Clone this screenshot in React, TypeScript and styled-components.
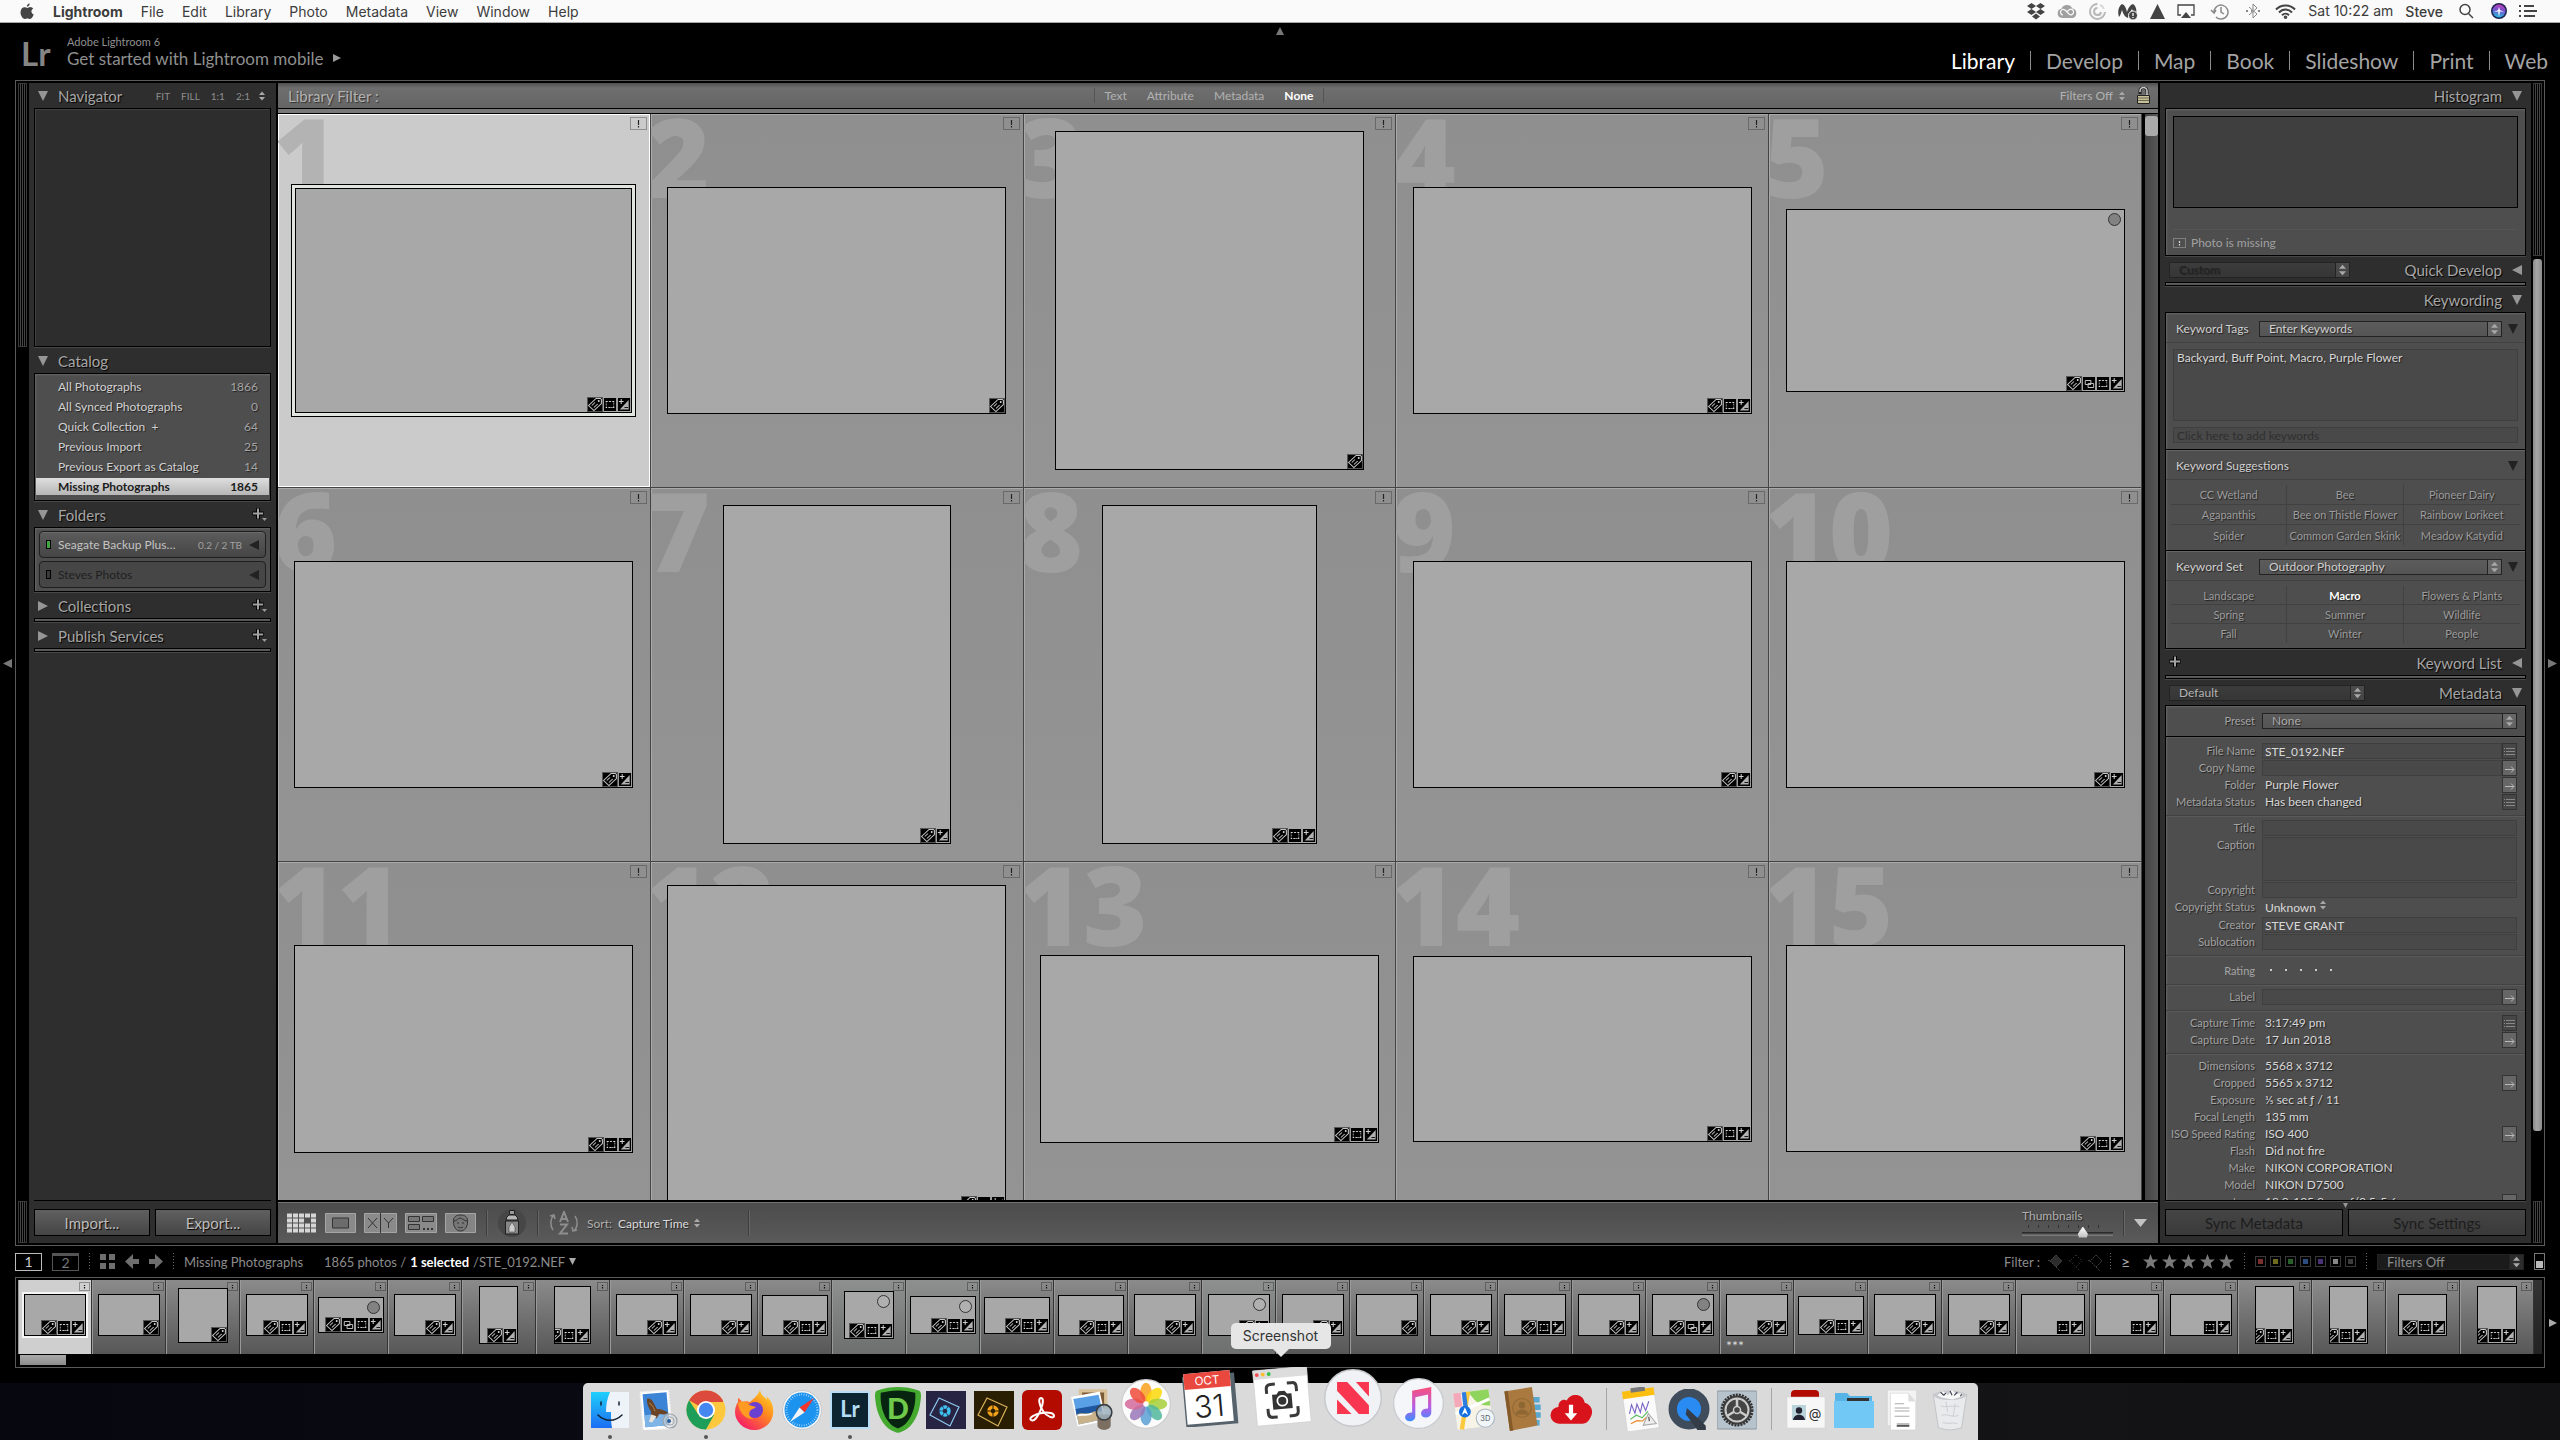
import React from "react";
import styled, { createGlobalStyle, css } from "styled-components";

const uiFont = `Lato, "Open Sans", "Noto Sans", sans-serif`;
const macFont = `Inter, Roboto, sans-serif`;

const Global = createGlobalStyle`
  * { box-sizing: border-box; }
  html, body, #root { height: 100%; }
  body { margin: 0; overflow: hidden; background: #000; font-family: ${uiFont}; font-size: 12px; color: #b4b4b4; }
  button, input, select, textarea { font-family: inherit; font-size: inherit; color: inherit; margin: 0; padding: 0; border: 0; background: none; border-radius: 0; }
  button { display: flex; align-items: center; text-align: left; cursor: pointer; }
  select { appearance: none; }
  svg { display: block; flex: none; }
  h1, h2, p, ul { margin: 0; padding: 0; font: inherit; }
`;

/* ---------- page ---------- */

const Page = styled.div`
  height: 100%;
  display: flex;
  flex-direction: column;
  background: linear-gradient(90deg, #07080f 0%, #0a0b12 30%, #141315 80%, #121113 100%);
`;

const MenuBar = styled.header`
  flex: none;
  height: 23px;
  display: flex;
  justify-content: space-between;
  align-items: center;
  background: #fafafa;
  border-bottom: 1px solid #a8a8a8;
  color: #3c3c3c;
  font: 14px/22px ${macFont};
`;

const MenuList = styled.nav`
  display: flex;
  align-items: center;
  gap: 18px;
  padding-left: 19px;
`;

const MenuItem = styled.button<{ $weight?: number }>`
  font-weight: ${(p) => p.$weight ?? 400};
`;

const StatusList = styled.div`
  display: flex;
  align-items: center;
  gap: 12px;
  padding-right: 23px;
`;

const Lightroom = styled.div`
  flex: 1;
  min-height: 0;
  display: flex;
  flex-direction: column;
  background: #000;
  padding-bottom: 15px;
`;

const Identity = styled.div`
  flex: none;
  height: 57px;
  display: grid;
  grid-template-columns: 1fr auto 1fr;
  padding: 0 12px;
  & > svg { margin-top: 4px; }
`;

const Brand = styled.div`
  display: flex;
  align-items: center;
  gap: 16px;
  padding-left: 9px;
  color: #8f8f8f;
`;

const Logo = styled.span`
  width: 30px;
  padding-top: 3px;
  font: 700 33px/40px ${uiFont};
  color: #858585;
`;

const BrandText = styled.div`
  font-size: 17px;
  line-height: 20px;
  & small { display: block; font-size: 11px; line-height: 13px; }
  & button { gap: 10px; }
`;

const Modules = styled.nav`
  justify-self: end;
  display: flex;
  align-items: center;
  padding-top: 18px;
  height: 57px;
`;

const ModuleLink = styled.a<{ $on?: boolean }>`
  padding: 0 15px;
  border-left: 1px solid #8b8b8b;
  font-size: 21px;
  line-height: 19px;
  text-decoration: none;
  color: ${(p) => (p.$on ? "#fff" : "#a3a3a3")};
  &:first-child { border-left: 0; }
  &:last-child { padding-right: 0; }
`;

const SideTip = styled.div`
  flex: none;
  width: 15px;
  display: flex;
  align-items: center;
  justify-content: center;
`;

const Band = styled.div<{ $grow?: boolean }>`
  display: flex;
  ${(p) => (p.$grow ? "flex: 1; min-height: 0;" : "flex: none;")}
`;

const Frame = styled.div`
  flex: 1;
  min-width: 0;
  display: flex;
  border: 1px solid #5a5a5a;
  padding: 2px;
  gap: 2px;
  background: #000;
`;

/* ---------- scroll rails ---------- */

const Rail = styled.div`
  flex: none;
  width: 9px;
  display: flex;
  flex-direction: column;
  gap: 3px;
`;

const Ribs = styled.div<{ $h: number }>`
  height: ${(p) => p.$h}px;
  border: 1px solid #3a3a3a;
  background: repeating-linear-gradient(90deg, #000 0 1px, #444 1px 2px);
`;

const RailThumb = styled.div`
  flex: 872;
  border-radius: 3px;
  background: linear-gradient(90deg, #8a8a8a, #a6a6a6 40%, #8e8e8e);
`;

const RailGap = styled.div<{ $grow: number }>`
  flex: ${(p) => p.$grow};
`;

/* ---------- side panels ---------- */

const Panel = styled.aside<{ $w: number }>`
  flex: none;
  width: ${(p) => p.$w}px;
  display: flex;
  flex-direction: column;
  padding: 0 5px;
  background: #2e2e2e;
`;

const PanelHead = styled.div`
  flex: none;
  height: 25px;
  display: flex;
  align-items: center;
  justify-content: space-between;
  padding: 0 4px;
`;

const HeadTitle = styled.button`
  margin-left: auto;
  gap: 10px;
  font-size: 15px;
  line-height: 20px;
  color: #a6a6a6;
  text-shadow: 1px 1px 1px #000;
  ${PanelHead} > &:first-child { margin-left: 0; }
`;

const Push = styled.span`
  flex: 1;
`;

const Zooms = styled.div`
  display: flex;
  align-items: center;
  gap: 11px;
  font-size: 10px;
  color: #8d8d8d;
  & svg { margin-left: -4px; }
`;

const Box = styled.section<{ $h?: number; $dark?: boolean; $grow?: boolean }>`
  ${(p) => (p.$grow ? "flex: 1; min-height: 0; overflow: hidden;" : "flex: none;")}
  ${(p) => p.$h && `height: ${p.$h}px;`}
  border: 1px solid #000;
  margin-bottom: ${(p) => (p.$grow ? 0 : 1)}px;
  background: ${(p) => (p.$dark ? "#2d2d2d" : "#4e4e4e")};
  box-shadow: 0 1px 0 #474747, inset 1px 1px 2px #666;
  ${(p) => p.$dark && "box-shadow: 0 1px 0 #474747, inset 1px 1px 1px #444;"}
`;

const CatalogList = styled(Box)`
  padding: 2px 1px 4px;
`;

const CatalogRow = styled.button<{ $on?: boolean }>`
  width: 100%;
  height: 20px;
  justify-content: space-between;
  padding: 0 11px 0 22px;
  color: #d2d2d2;
  text-shadow: 1px 1px 1px #222;
  & span:last-child { color: #a5a5a5; }
  ${(p) => p.$on && css`
    background: linear-gradient(#dedede, #b6b6b6) 0 2px / 100% 17px no-repeat;
    color: #1c1c1c;
    font-weight: 700;
    text-shadow: none;
    & span:last-child { color: #1c1c1c; }
  `}
`;

const FolderList = styled(Box)`
  display: flex;
  flex-direction: column;
  gap: 3px;
  padding: 3px 4px;
`;

const FolderRow = styled.button<{ $off?: boolean }>`
  height: 27px;
  gap: 7px;
  padding: 0 6px;
  border: 1px solid #1f1f1f;
  border-radius: 4px;
  background: linear-gradient(#5c5c5c, #454545);
  color: #c4c4c4;
  box-shadow: inset 0 1px 0 #6a6a6a;
  & small { margin-left: auto; font-size: 10px; color: #a0a0a0; }
  ${(p) => p.$off && "color: #1f1f1f; background: #464646; box-shadow: none;"}
`;

const Led = styled.i<{ $on?: boolean }>`
  width: 5px;
  height: 9px;
  border: 1px solid #000;
  background: ${(p) => (p.$on ? "#3fa63f" : "#3a3a3a")};
`;

const PanelSpace = styled.div`
  flex: 1;
  border-bottom: 1px solid #000;
`;

const PanelFoot = styled.div`
  position: relative;
  flex: none;
  display: grid;
  grid-template-columns: 1fr 1fr;
  gap: 5px;
  padding: 8px 0 7px;
`;

const FootTip = styled.div`
  position: absolute;
  top: 2px;
  left: 0;
  right: 0;
  display: flex;
  justify-content: center;
`;

const FootButton = styled.button<{ $off?: boolean }>`
  height: 27px;
  justify-content: center;
  border: 1px solid #000;
  font-size: 15px;
  color: ${(p) => (p.$off ? "#1d1d1d" : "#bdbdbd")};
  background: ${(p) => (p.$off ? "linear-gradient(#454545, #3a3a3a)" : "linear-gradient(#606060, #454545)")};
  text-shadow: ${(p) => (p.$off ? "none" : "1px 1px 1px #000")};
`;

/* ---------- drop-downs ---------- */

const SelectBox = styled.span<{ $w?: number; $tone?: string }>`
  ${(p) => (p.$w ? `width: ${p.$w}px;` : "flex: 1; min-width: 0;")}
  height: 16px;
  display: flex;
  border: 1px solid #232323;
  background: ${(p) => p.$tone ?? "linear-gradient(#5c5c5c, #555)"};
  & select { flex: 1; min-width: 0; height: 14px; padding-left: 9px; line-height: 14px; text-shadow: 1px 1px 1px #222; }
  & > svg { width: 14px; height: 14px; border-left: 1px solid #232323; background: rgba(255, 255, 255, 0.08); }
`;

type PickProps = { id: string; name: string; value: string; w?: number; tone?: string; color?: string };
const Pick = ({ id, name, value, w, tone, color }: PickProps) => (
  <SelectBox $w={w} $tone={tone} style={color ? { color } : undefined}>
    <select id={id} aria-label={name} defaultValue={value}>
      <option>{value}</option>
    </select>
    <UpDown />
  </SelectBox>
);

/* ---------- small glyphs ---------- */

const UpDown = ({ color = "#a8a8a8" }: { color?: string }) => (
  <svg width="10" height="12" viewBox="0 0 10 12" fill={color}>
    <path d="M5 1.5 8 5H2zM5 10.5 8 7H2z" />
  </svg>
);

type Dir = "down" | "left" | "right" | "up";
const turns: Record<Dir, string> = { down: "M0 0h10L5 10z", left: "M10 0v10L0 5z", right: "M0 0v10l10-5z", up: "M0 10h10L5 0z" };
const Tri = ({ dir, size = 10, color = "#969696" }: { dir: Dir; size?: number; color?: string }) => (
  <svg width={size} height={size} viewBox="0 0 10 10" fill={color}>
    <path d={turns[dir]} />
  </svg>
);

const Plus = ({ menu }: { menu?: boolean }) => (
  <svg width="15" height="15" viewBox="0 0 15 15">
    <path d="M6 1v11M0.5 6.5h11" stroke="#000" strokeWidth="4" />
    <path d="M6 1.5v10M1 6.5h10" stroke="#a2a2a2" strokeWidth="2" />
    {menu && <path d="M10 11h5l-2.5 3z" fill="#999" />}
  </svg>
);

const MissingMark = ({ w = 17, h = 13, color = "#222" }: { w?: number; h?: number; color?: string }) => (
  <svg width={w} height={h} viewBox={`0 0 ${w} ${h}`}>
    <rect x="0.5" y="0.5" width={w - 1} height={h - 1} fill="none" stroke={color} strokeDasharray="1 1" opacity="0.7" />
    <path d={`M${w / 2} 3v${h - 8}M${w / 2} ${h - 4}v1.5`} stroke={color} strokeWidth="1.2" />
  </svg>
);

const badgeArt: Record<string, React.ReactNode> = {
  t: (
    <>
      <path d="M8.5 1.5h4l1 1v4l-7 7-5-5z" fill="#000" stroke="#c4c4c4" />
      <path d="M4.5 8.500l3-3M6.500 10.500l3.500-3.500" stroke="#c4c4c4" />
      <circle cx="11" cy="4" r="0.9" fill="#ddd" />
    </>
  ),
  s: <path d="M3.5 4.5h6v4h-6zM6.5 7.500h6v4h-6z" fill="#000" stroke="#c4c4c4" />,
  c: (
    <>
      <path d="M3.5 4.5h8v6h-8z" fill="none" stroke="#9a9a9a" strokeDasharray="2 1" />
      <path d="M3 4h1v1H3zM11 4h1v1h-1zM3 10h1v1H3zM11 10h1v1h-1zM7 4h1v1H7zM7 10h1v1H7z" fill="#fff" />
    </>
  ),
  a: (
    <>
      <path d="M12.500 3v9.500H3z" fill="#b0b0b0" />
      <path d="M2 4.500h5M4.500 2v5" stroke="#d8d8d8" />
      <path d="M8 10.500h4" stroke="#111" />
    </>
  ),
};

const Badge = ({ kind }: { kind: string }) => (
  <svg width={kind === "t" ? 16 : 14} height="15" viewBox="0 0 15 15" preserveAspectRatio="none">
    <rect width="15" height="15" fill="#000" />
    <rect x="0.5" y="0.5" width="14" height="14" fill="none" stroke={kind === "t" ? "#555" : "#a8a8a8"} />
    {badgeArt[kind]}
  </svg>
);

/* ---------- centre: filter bar, grid, toolbar ---------- */

const Centre = styled.main`
  flex: 1;
  min-width: 0;
  display: flex;
  flex-direction: column;
`;

const FilterBar = styled.div`
  flex: none;
  height: 25px;
  display: grid;
  grid-template-columns: 1fr auto 1fr;
  align-items: center;
  padding: 0 8px 0 10px;
  background: linear-gradient(#505050, #6e6e6e 5px, #656565);
  color: #b2b2b2;
  text-shadow: 1px 1px 1px #333;
`;

const FilterTitle = styled.h2`
  font-size: 15px;
`;

const FilterTabs = styled.div`
  display: flex;
  gap: 20px;
  margin-right: 20px;
  padding: 0 10px;
  border: solid #555;
  border-width: 0 1px;
`;

const FilterTab = styled.button<{ $on?: boolean }>`
  color: ${(p) => (p.$on ? "#fff" : "#b2b2b2")};
  font-weight: ${(p) => (p.$on ? 700 : 400)};
`;

const FilterEnd = styled.div`
  justify-self: end;
  display: flex;
  align-items: center;
  gap: 4px;
  & svg:last-child { margin-left: 6px; }
`;

const FilterLip = styled.div`
  flex: none;
  height: 6px;
  border: solid #000;
  border-width: 1px 0;
  background: #787878;
`;

const GridArea = styled.div`
  flex: 1;
  min-height: 0;
  display: flex;
  border-bottom: 2px solid #000;
`;

const PhotoGrid = styled.div`
  flex: 1;
  display: grid;
  grid-template-columns: repeat(5, 1fr);
  grid-auto-rows: 374px;
  overflow: hidden;
  border-right: 3px solid #000;
`;

const Cell = styled.figure<{ $on?: boolean }>`
  position: relative;
  margin: 0;
  display: flex;
  align-items: center;
  justify-content: center;
  overflow: hidden;
  border: solid #444;
  border-width: 0 1px 1px 0;
  background: ${(p) => (p.$on ? "#cbcbcb" : "linear-gradient(#8f8f8f, #949494)")};
  box-shadow: inset 1px 1px 0 ${(p) => (p.$on ? "#fff" : "#aaa")}${(p) => (p.$on ? ", inset -1px -1px 0 #fff" : "")};
`;

const CellNumber = styled.span<{ $on?: boolean }>`
  position: absolute;
  left: -5px;
  top: 0;
  font: 800 110px/83px "Open Sans", "Noto Sans", sans-serif;
  color: ${(p) => (p.$on ? "#b3b3b3" : "#9f9f9f")};
`;

const CellMark = styled.span`
  position: absolute;
  top: 3px;
  right: 3px;
`;

const Photo = styled.div<{ $w: number; $h: number; $on?: boolean }>`
  position: relative;
  width: ${(p) => p.$w}px;
  height: ${(p) => p.$h}px;
  border: 1px solid #000;
  background: #a8a8a8;
  ${(p) => p.$on && "box-shadow: 0 0 0 3px #e2e4e0, 0 0 0 4px #000;"}
`;

const Badges = styled.span`
  position: absolute;
  right: 0;
  bottom: 0;
  display: flex;
  max-width: 100%;
  justify-content: flex-end;
  overflow: hidden;
`;

const LabelDot = styled.i<{ $light?: boolean }>`
  position: absolute;
  top: 3px;
  right: 3px;
  width: 13px;
  height: 13px;
  border: 1px solid #333;
  border-radius: 50%;
  background: ${(p) => (p.$light ? "#b0b0b0" : "#828282")};
`;

const GridScroll = styled.div`
  flex: none;
  width: 13px;
  padding: 2px 0;
  background: linear-gradient(90deg, #444, #575757);
  & i { display: block; height: 20px; border-radius: 3px; background: #aaa; }
`;

const Toolbar = styled.div`
  flex: none;
  height: 41px;
  display: flex;
  align-items: center;
  padding: 0 11px 0 8px;
  border-top: 1px solid #737373;
  background: linear-gradient(#4c4c4c, #5a5a5a);
  color: #b0b0b0;
  text-shadow: 1px 1px 1px #222;
`;

const ViewModes = styled.div`
  display: flex;
  gap: 8px;
`;

const Rule = styled.i`
  width: 1px;
  height: 26px;
  background: #3d3d3d;
  box-shadow: 1px 0 0 #666;
  margin: 0 10px;
`;

const SortBy = styled.label`
  display: flex;
  align-items: center;
  gap: 6px;
  margin-left: 7px;
  padding-right: 36px;
  & select { color: #dcdcdc; text-shadow: 1px 1px 1px #222; }
  & svg { margin-left: -4px; }
`;

const ThumbSize = styled.label`
  display: flex;
  flex-direction: column;
  width: 91px;
  & input {
    appearance: none;
    width: 100%;
    height: 15px;
    margin-top: 1px;
    background:
      repeating-linear-gradient(90deg, #333 0 1px, transparent 1px 10px) 6px 1px / 80px 3px no-repeat,
      linear-gradient(#1c1c1c, #8a8a8a) 0 8px / 100% 4px no-repeat;
  }
  & input::-webkit-slider-thumb {
    appearance: none;
    width: 10px;
    height: 11px;
    margin-top: 2px;
    background: linear-gradient(#fff, #bbb);
    clip-path: polygon(50% 0, 100% 65%, 90% 100%, 10% 100%, 0 65%);
  }
`;

/* ---------- film strip ---------- */

const InfoBar = styled.div`
  flex: none;
  height: 31px;
  display: flex;
  align-items: center;
  justify-content: space-between;
  padding: 0 15px;
  color: #8c8c8c;
  font-size: 13px;
`;

const InfoSide = styled.div`
  display: flex;
  align-items: center;
  gap: 10px;
`;

const Dots = styled.i`
  width: 1px;
  height: 18px;
  background: repeating-linear-gradient(#666 0 1px, transparent 1px 3px);
`;

const Monitor = styled.button<{ $on?: boolean }>`
  width: 27px;
  height: 18px;
  justify-content: center;
  border: 1px solid ${(p) => (p.$on ? "#bbb" : "#555")};
  border-top-width: ${(p) => (p.$on ? 1 : 3)}px;
  color: ${(p) => (p.$on ? "#ccc" : "#777")};
  font-size: 14px;
  line-height: 14px;
`;

const Source = styled.button`
  padding-right: 11px;
`;

const Crumb = styled.button`
  gap: 4px;
  & b { color: #fff; }
`;

const Stars = styled.span`
  display: flex;
  gap: 4px;
`;

const Chips = styled.span`
  display: flex;
  gap: 4px;
`;

const Chip = styled.button<{ $c: string }>`
  width: 11px;
  height: 11px;
  border: 1px solid #3a3a3a;
  background: ${(p) => p.$c} content-box;
  padding: 2px;
`;

const AtLeast = styled.span`
  width: 12px;
  color: #aaa;
  font-size: 16px;
`;

const Switch = styled.button`
  width: 11px;
  height: 17px;
  align-items: flex-end;
  border: 1px solid #777;
  padding: 1px;
  & i { width: 100%; height: 7px; background: #bbb; }
`;

const StripFrame = styled(Frame)`
  flex-direction: column;
  gap: 0;
  padding-bottom: 0;
`;

const Strip = styled.div`
  height: 74px;
  display: flex;
  overflow: hidden;
  background: linear-gradient(#333, #222);
`;

const StripCell = styled.div<{ $on?: boolean; $lit?: boolean }>`
  position: relative;
  flex: none;
  width: 74px;
  display: flex;
  align-items: center;
  justify-content: center;
  padding-bottom: 4px;
  border-right: 1px solid #333;
  box-shadow: inset 1px 0 0 #999;
  background: ${(p) => (p.$on ? "#cfcfcf" : p.$lit ? "linear-gradient(#8d908f, #6c6f6e)" : "linear-gradient(#8b8b8b, #575757)")};
  & ${Photo} { ${(p) => p.$on && "box-shadow: 0 0 0 2px #f5f5f5;"} }
`;

const StripMark = styled.span`
  position: absolute;
  top: 2px;
  right: 1px;
`;

const StripRating = styled.span`
  position: absolute;
  left: 6px;
  bottom: 1px;
  font-size: 14px;
  line-height: 14px;
  color: #ddd;
`;

const StripScroll = styled.div`
  height: 13px;
  padding: 1px 2px;
  & i { display: block; width: 46px; height: 10px; background: linear-gradient(#aaa, #8b8b8b); }
`;

/* ---------- right panel content ---------- */

const HistBox = styled(Box)`
  padding: 7px;
`;

const Graph = styled.div`
  height: 92px;
  border: 1px solid #000;
  background: #3f3f3f;
`;

const HistNote = styled.div`
  display: flex;
  align-items: center;
  gap: 5px;
  margin-top: 21px;
  height: 26px;
  border-top: 1px solid #555;
  color: #a0a0a0;
`;

const KeySection = styled.div`
  border-bottom: 1px solid #000;
  box-shadow: 0 1px 0 #666;
  padding-bottom: 5px;
  &:last-child { border-bottom: 0; box-shadow: none; }
`;

const KeyHead = styled.div`
  height: 30px;
  display: flex;
  align-items: center;
  gap: 6px;
  padding: 2px 7px 0 10px;
  border-bottom: 1px solid #424242;
  color: #d0d0d0;
  text-shadow: 1px 1px 1px #222;
  & > label, & > h2 { flex: 0 0 77px; white-space: nowrap; }
  & > svg { margin-left: auto; }
`;

const KeyText = styled.textarea`
  display: block;
  width: calc(100% - 14px);
  height: 72px;
  margin: 6px 7px;
  padding: 0 3px;
  border: 1px solid #3f3f3f;
  background: #494949;
  color: #d8d8d8;
  line-height: 15px;
  resize: none;
  text-shadow: 1px 1px 1px #222;
`;

const KeyInput = styled.input`
  display: block;
  width: calc(100% - 14px);
  height: 16px;
  margin: 0 7px 1px;
  padding: 0 3px;
  border: 1px solid #3f3f3f;
  background: #494949;
  &::placeholder { color: #2f2f2f; }
`;

const KeyGrid = styled.div<{ $row: number }>`
  display: grid;
  grid-template-columns: repeat(3, 1fr);
  grid-auto-rows: ${(p) => p.$row}px;
  margin: 5px 5px 0;
`;

const KeyWord = styled.button<{ $on?: boolean }>`
  justify-content: center;
  white-space: nowrap;
  font-size: 11px;
  color: ${(p) => (p.$on ? "#fff" : "#9c9c9c")};
  font-weight: ${(p) => (p.$on ? 700 : 400)};
  text-shadow: 1px 1px 1px #222;
  border: solid #414141;
  border-width: 0 1px 1px 0;
  &:nth-child(3n) { border-right: 0; }
  &:nth-last-child(-n + 3) { border-bottom: 0; }
`;

const MetaGroup = styled.div<{ $strong?: boolean }>`
  padding: 4px 8px 4px 0;
  border-bottom: 1px solid ${(p) => (p.$strong ? "#000" : "#424242")};
  box-shadow: 0 1px 0 #5a5a5a;
  ${(p) => p.$strong && "padding: 7px 8px 6px 0; margin-bottom: 2px;"}
`;

const MetaRow = styled.div<{ $tall?: boolean; $loose?: boolean }>`
  display: flex;
  height: ${(p) => (p.$tall ? 44 : p.$loose ? 17 : 16)}px;
  margin-bottom: 1px;
  line-height: 16px;
  color: #d8d8d8;
  text-shadow: 1px 1px 1px #222;
  & > label, & > span:first-child { flex: 0 0 89px; margin-right: 7px; text-align: right; font-size: 11px; color: #a3a3a3; white-space: nowrap; }
  & > label { align-self: flex-start; }
`;

const MetaSelect = styled.select`
  padding: 0 2px 0 3px;
`;

const MetaInput = styled.input`
  flex: 1;
  min-width: 0;
  padding-left: 2px;
  border: 1px solid #3f3f3f;
  background: #494949;
`;

const MetaArea = styled.textarea`
  flex: 1;
  border: 1px solid #3f3f3f;
  background: #494949;
  resize: none;
`;

const MetaValue = styled.span`
  flex: 1;
  padding-left: 3px;
`;

const MetaButton = styled.button<{ $dark?: boolean }>`
  width: 15px;
  justify-content: center;
  border: 1px solid #333;
  background: ${(p) => (p.$dark ? "#474747" : "#666")};
`;

const Rating = styled.div`
  display: flex;
  align-items: center;
  height: 20px;
  & > span:first-child { flex: 0 0 89px; margin-right: 7px; text-align: right; font-size: 11px; color: #a3a3a3; }
  & > i { width: 15px; display: flex; padding-left: 8px; }
  & > i::after { content: ""; width: 2px; height: 2px; background: #ccc; }
`;

type MetaItem = { label: string; value?: string; kind?: "input" | "area" | "text" | "select"; act?: "list" | "go" };

const MetaLine = ({ item }: { item: MetaItem }) => {
  const id = "meta-" + item.label.toLowerCase().replace(/ /g, "-");
  const kind = item.kind ?? "text";
  return (
    <MetaRow $tall={kind === "area"} $loose={kind === "select"}>
      {kind === "text" ? <span>{item.label}</span> : <label htmlFor={id}>{item.label}</label>}
      {kind === "input" && <MetaInput id={id} defaultValue={item.value} />}
      {kind === "area" && <MetaArea id={id} />}
      {kind === "text" && <MetaValue>{item.value}</MetaValue>}
      {kind === "select" && (
        <>
          <MetaSelect id={id}>
            <option>{item.value}</option>
          </MetaSelect>
          <UpDown />
        </>
      )}
      {item.act && (
        <MetaButton $dark={item.act === "list"} aria-label={item.label + " action"}>
          <svg width="11" height="10" viewBox="0 0 11 10" fill="none" stroke={item.act === "list" ? "#888" : "#b8b8b8"}>
            {item.act === "list" ? <path d="M0 2.5h1M2 2.5h9M0 5.5h1M2 5.5h9M0 8.5h1M2 8.5h9" /> : <path d="M1 6.5h9M7 3.5l3 3-3 3" />}
          </svg>
        </MetaButton>
      )}
    </MetaRow>
  );
};

/* ---------- dock ---------- */

const DockRow = styled.footer`
  flex: none;
  display: flex;
  justify-content: center;
`;

const Dock = styled.div`
  height: 57px;
  display: flex;
  align-items: flex-end;
  padding: 0 4px 10px 3px;
  border-radius: 5px 5px 0 0;
  background: #dadada;
`;

const DockItem = styled.button<{ $slot: number; $lift?: number }>`
  position: relative;
  flex: none;
  width: ${(p) => p.$slot}px;
  margin-bottom: ${(p) => p.$lift ?? 0}px;
  justify-content: center;
`;

const RunDot = styled.i`
  position: absolute;
  bottom: -9px;
  left: 50%;
  width: 4px;
  height: 4px;
  margin-left: -2px;
  border-radius: 50%;
  background: #555;
`;

const DockRule = styled.i`
  width: 1px;
  height: 42px;
  margin: 0 10px;
  background: #a5a5a5;
`;

const Tip = styled.span`
  position: absolute;
  bottom: calc(100% + 18px);
  left: 50%;
  width: 100px;
  margin-left: -51px;
  height: 26px;
  border-radius: 5px;
  background: #e6e6e6;
  color: #333;
  font: 14px/26px ${macFont};
  text-align: center;
  &::after {
    content: "";
    position: absolute;
    top: 26px;
    left: 42px;
    border: 8px solid transparent;
    border-top-color: #e6e6e6;
    border-bottom: 0;
  }
`;

const Art = ({ size, children }: { size: number; children: React.ReactNode }) => (
  <svg width={size} height={size} viewBox="0 0 40 40">{children}</svg>
);

const petals = ["#f9a01b", "#fcd80b", "#a6cf3a", "#4fb79a", "#5a9fd4", "#9a77b8", "#d3689a", "#ef4b3a"];

type DockEntry = { name: string; slot?: number; size?: number; lift?: number; run?: boolean; tip?: boolean; art?: React.ReactNode };

const dock: DockEntry[] = [
  { name: "Finder", run: true, art: <>
    <defs><linearGradient id="fi" x2="0" y2="1"><stop stopColor="#1fd0fb" /><stop offset="1" stopColor="#1c6cf2" /></linearGradient></defs>
    <path d="M1 2h38v36H1z" fill="#eef3f9" />
    <path d="M1 2h19c-3 7-4 13-4 20h5c0 6 0 11 1 16H1z" fill="url(#fi)" />
    <path d="M11 12v3M29 12v3" stroke="#123" strokeWidth="1.5" strokeLinecap="round" />
    <path d="M8 25c7 7 17 7 24 0" fill="none" stroke="#123" strokeWidth="1.5" strokeLinecap="round" />
  </> },
  { name: "Mail", art: <g transform="rotate(-5 20 20)">
    <path d="M4 1h28v38H4z" fill="#fff" stroke="#f6f6f6" strokeDasharray="2 1" strokeWidth="2" />
    <path d="M6 3h24v33H6z" fill="#3c85d6" /><path d="M6 24h24v12H6z" fill="#7fb4e6" />
    <path d="M10 8c2-1 5 1 6 4l3 7c3 0 8 2 11 5l-4 1-5-1-3 4-3-1c-2-1-3-3-2-6-2-4-4-9-3-13z" fill="#6a4426" />
    <path d="M12 12c2 2 4 5 5 9" fill="none" stroke="#a77b4e" /><path d="M13 24l5 2-5 6-3-1z" fill="#e9e4da" />
    <circle cx="31" cy="32" r="7" fill="#dadada" fillOpacity="0.5" stroke="#9aa4ad" strokeWidth="1.2" />
    <circle cx="31" cy="32" r="4" fill="none" stroke="#9aa4ad" /><circle cx="30" cy="32" r="2" fill="#2d5f9c" />
  </g> },
  { name: "Chrome", run: true, art: <>
    <circle cx="20" cy="20" r="19.5" fill="#fdc83d" />
    <path d="M20 20 3.1 10.25A19.5 19.5 0 0 1 36.9 10.25L37 12H20z" fill="#db4a3d" />
    <path d="M3.1 10.25A19.5 19.5 0 0 0 20 39.5L28 25 12 24z" fill="#1e9e59" />
    <circle cx="20" cy="20" r="9" fill="#fff" /><circle cx="20" cy="20" r="7.2" fill="#4587f1" />
  </> },
  { name: "Firefox", art: <>
    <defs><linearGradient id="ff" x1="1" x2="0.2" y2="1"><stop stopColor="#ffe226" /><stop offset="0.45" stopColor="#ff8a1e" /><stop offset="1" stopColor="#f5156c" /></linearGradient></defs>
    <path d="M26 0c1 6 5 7 7 10 0-2 0-3-1-4 6 5 8 11 7 18-1 9-9 16-19 16S1 32 1 22c0-4 1-7 3-10V8c2 1 3 2 4 4 3-1 5-1 8 0 3-3 7-5 10-12z" fill="url(#ff)" />
    <circle cx="21" cy="20" r="8" fill="#6b3fd0" /><path d="M4 13c5-3 9-1 11 2l7 2c-2 2-5 2-6 4s-2 6 4 8c-9 1-15-7-16-16z" fill="#ff9a22" />
  </> },
  { name: "Safari", art: <>
    <circle cx="20" cy="20" r="19.5" fill="#f3f5f7" stroke="#c6c9cc" /><circle cx="20" cy="20" r="17.5" fill="#1c93ee" />
    <circle cx="20" cy="20" r="15.5" fill="none" stroke="#cfe9ff" strokeWidth="2" strokeDasharray="0.6 1.8" />
    <path d="M32 8 22.5 22.5 17.5 17.5z" fill="#f4352c" /><path d="M8 32 17.5 17.5 22.5 22.5z" fill="#f0f4f8" />
  </> },
  { name: "Lightroom", run: true, art: <>
    <path d="M0 1h40v38H0z" fill="#b7dcf3" /><path d="M2 3h36v34H2z" fill="#0c2330" />
    <text x="20" y="27" textAnchor="middle" fontFamily="Lato, sans-serif" fontWeight="700" fontSize="22" fill="#b4dcf4">Lr</text>
  </> },
  { name: "Dashlane", size: 46, lift: -3, art: <>
    <path d="M20 0c6 0 12 1 18 3 3 1 2 7 1 13-2 11-8 20-16 23-2 1-4 1-6 0C9 36 3 27 1 16 0 10-1 4 2 3 8 1 14 0 20 0z" fill="#43a92f" />
    <path d="M20 3c6 0 10 1 15 2 1 14-5 28-15 31C10 33 4 19 5 5c5-1 9-2 15-2z" fill="#06240f" />
    <text x="20" y="28" textAnchor="middle" fontFamily="Lato, sans-serif" fontWeight="900" fontSize="25" fill="#6fc94a">D</text>
  </> },
  { name: "Elements Organizer", art: <>
    <path d="M0 1h40v38H0z" fill="#262343" /><path d="M13 8l20 9-9 19-20-11z" fill="none" stroke="#8fc9ef" strokeWidth="1.2" />
    <circle cx="19" cy="21" r="4" fill="none" stroke="#3fc0ee" strokeWidth="3.5" strokeDasharray="3.5 0.7" />
  </> },
  { name: "Elements Editor", art: <>
    <path d="M0 1h40v38H0z" fill="#2a1e02" /><path d="M13 8l20 9-9 19-20-11z" fill="none" stroke="#d8b25a" strokeWidth="1.2" />
    <circle cx="19" cy="21" r="4" fill="none" stroke="#f5a21b" strokeWidth="3.5" /><path d="M19 15v12M13 21h12" stroke="#2a1e02" />
  </> },
  { name: "Acrobat", art: <>
    <rect y="0" width="40" height="40" rx="6" fill="#b30b00" />
    <path d="M19 8c3 0 2 6 0 11-3 8-7 13-10 11s4-6 11-7 12 0 12 3-7 1-11-5-5-13-2-13z" fill="none" stroke="#fff" strokeWidth="2" />
  </> },
  { name: "Preview", slot: 52, size: 44, lift: -1, art: <>
    <path d="M8 2h26v18H8z" fill="#d9c29a" /><path d="M11 5h20v14H11z" fill="#7a5a36" />
    <path d="M1 9l26-5 6 27-26 5z" fill="#fff" />
    <path d="M3 11l23-4 5 22-23 5z" fill="#5aa0e6" /><path d="M5 20l23-4 1 6-23 4z" fill="#1f56a0" />
    <path d="M6 25c6-3 9 1 14-2 3-2 6 0 9-1l2 7-23 5z" fill="#c9b28a" /><path d="M7 26c5-2 8 1 13-2" fill="none" stroke="#fff" strokeWidth="1.5" />
    <path d="M25 25h12v10a6 4 0 0 1-12 0z" fill="#7c6f62" /><circle cx="31" cy="23" r="7" fill="#9fb3c0" fillOpacity="0.8" stroke="#3b3f42" strokeWidth="1.5" />
  </> },
  { name: "Photos", slot: 56, size: 50, lift: 1, art: <>
    <circle cx="20" cy="20" r="19.5" fill="#fbfbfb" stroke="#cfcfcf" />
    {petals.map((c, i) => <ellipse key={c} cx="20" cy="10.5" rx="4.5" ry="7.5" fill={c} opacity="0.85" transform={`rotate(${i * 45} 20 20)`} />)}
  </> },
  { name: "Calendar", slot: 72, size: 58, lift: 3, art: <g transform="rotate(-5 20 20)">
    <path d="M2 4h36v35H2z" fill="#56636d" /><path d="M3 2h32v35H3z" fill="#fff" /><path d="M3 2h32v11H3z" fill="#e9483e" />
    <text x="19" y="10.5" textAnchor="middle" fontFamily="Inter, sans-serif" fontSize="8" fill="#fff">OCT</text>
    <text x="19" y="33" textAnchor="middle" fontFamily="Inter, sans-serif" fontWeight="300" fontSize="21" fill="#222">31</text>
  </g> },
  { name: "Screenshot", slot: 72, size: 60, lift: 3, tip: true, art: <g transform="rotate(-5 20 20)">
    <path d="M2 1h36v37H2z" fill="#fff" stroke="#cfcfcf" strokeWidth="0.5" /><path d="M2 1h36v6H2z" fill="#dcdcdc" />
    <circle cx="4.5" cy="4" r="1.3" fill="#f25056" /><circle cx="8.5" cy="4" r="1.3" fill="#fabe2c" /><circle cx="12.5" cy="4" r="1.3" fill="#39c24a" />
    <path d="M10 17v-3q0-3 3-3h3M24 11h3q3 0 3 3v3M30 27v3q0 3-3 3h-3M16 33h-3q-3 0-3-3v-3" fill="none" stroke="#3a3a3a" strokeWidth="2" />
    <path d="M13.5 18h3l1.5-2h4l1.5 2h3v10h-13z" fill="#333" /><circle cx="20" cy="22.5" r="3.3" fill="none" stroke="#fff" strokeWidth="1.2" />
  </g> },
  { name: "News", slot: 70, size: 58, lift: 3, art: <>
    <circle cx="20" cy="20" r="19.5" fill="#f1f2f6" stroke="#c7c8cc" />
    <path d="M9 9h7l15 16v6h-7L9 15z" fill="#f9364f" /><path d="M22 9h9v10zM9 21v10h10z" fill="#f9364f" />
  </> },
  { name: "Music", slot: 62, size: 51, lift: 1, art: <>
    <defs><linearGradient id="mu" x2="0" y2="1"><stop stopColor="#fb4f78" /><stop offset="0.6" stopColor="#b35ee8" /><stop offset="1" stopColor="#3c8dfd" /></linearGradient></defs>
    <circle cx="20" cy="20" r="19.5" fill="#f5f6f9" stroke="#c9cbd0" />
    <path d="M15 10l15-3v20c0 5-8 5-8 1 0-3 3-4 5.5-4V13l-10 2v15c0 5-8 5-8 1 0-3 3-4 5.5-4z" fill="url(#mu)" />
  </> },
  { name: "Maps", size: 43, lift: -1, art: <>
    <g transform="rotate(-7 20 20)"><path d="M3 3h33v34H3z" fill="#f7f3e6" /><path d="M17 3h19v15c-10 0-14-6-19-15z" fill="#8fd45c" /><path d="M3 3h7v13H3z" fill="#f5a9b8" />
    <path d="M3 22l33-10" stroke="#fff" strokeWidth="3" /><path d="M7 37 17 3" stroke="#fbc93c" strokeWidth="4" /><path d="M13 3v18" stroke="#2f7de0" strokeWidth="4" /></g>
    <circle cx="12" cy="22" r="5.5" fill="#1670e2" /><path d="M12 18l3 7-3-2-3 2z" fill="#fff" />
    <circle cx="31" cy="28" r="8.500" fill="#f2f5f7" stroke="#a9b6c0" />
    <text x="31" y="31" textAnchor="middle" fontFamily="Inter, sans-serif" fontSize="7" fill="#53616c">3D</text>
  </> },
  { name: "Contacts", size: 44, lift: -1, art: <>
    <path d="M30 9h6v5h-6zM31 16h6v5h-6zM31 23h6v5h-6zM31 30h5v5h-5z" fill="#5aa7cf" />
    <path d="M4 4l25-4 5 35-25 5z" fill="#a9793f" /><path d="M4 4l3-.5 5 36-3 .5z" fill="#845a29" />
    <circle cx="20" cy="19" r="8.5" fill="none" stroke="#936a34" /><circle cx="20" cy="16.5" r="3" fill="#8f6732" /><path d="M14 25c1-6 11-6 12 0z" fill="#8f6732" />
  </> },
  { name: "Cloud download", slot: 50, size: 42, art: <>
    <path d="M9 34a8 8 0 0 1-1-16c0-6 5-8 8-6C19 4 32 5 33 14c7 2 9 9 5 15-2 4-5 5-8 5z" fill="#d8131b" />
    <path d="M18 16h4v8h4l-6 7-6-7h4z" fill="#fff" />
  </> },
  { name: "rule-1" },
  { name: "Notes", size: 44, lift: -1, art: <g transform="rotate(-8 20 20)">
    <path d="M5 2h29v37H5z" fill="#fafafa" stroke="#ccc" strokeWidth="0.5" /><path d="M5 2h29v7H5z" fill="#fdbe12" /><path d="M13 0h13v4H13z" fill="#777" />
    <path d="M9 23l3-8 2 8 3-8 2 8 3-8 2 7 4-8" fill="none" stroke="#7a64c8" /><path d="M9 28l6-3 5 3 6-5" fill="none" stroke="#54b95a" /><path d="M9 32l6-2 5 1 4-3" fill="none" stroke="#f08b2c" />
    <path d="M26 25l6 10H20z" fill="#eee" stroke="#aaa" /><path d="M26 28v4" stroke="#444" />
  </g> },
  { name: "QuickTime", size: 42, lift: -1, art: <>
    <circle cx="20" cy="19" r="15.5" fill="#2a8bf2" stroke="#3e4c5c" strokeWidth="8" /><path d="M18 18l18 17v4h-8L17 24z" fill="#333c47" />
  </> },
  { name: "System Preferences", art: <>
    <rect y="1" width="40" height="38" rx="1" fill="#b6c2cc" stroke="#8b959d" />
    <circle cx="20" cy="20" r="14.5" fill="#444" /><circle cx="20" cy="20" r="15" fill="none" stroke="#333" strokeWidth="3" strokeDasharray="2 1" />
    <circle cx="20" cy="20" r="11.5" fill="none" stroke="#ccc" strokeWidth="2" /><path d="M20 20V9M20 20l10 6M20 20l-10 6" stroke="#ccc" strokeWidth="2.5" /><circle cx="20" cy="20" r="3.5" fill="#444" stroke="#ccc" strokeWidth="1.5" />
  </> },
  { name: "rule-2" },
  { name: "Address cards", art: <>
    <rect x="5" y="0" width="28" height="14" rx="4" fill="#b30b00" /><path d="M1 7h38v31H1z" fill="#f7f7f7" stroke="#ccc" strokeWidth="0.5" /><path d="M6 15h14v15H6z" fill="#b8d3d9" />
    <circle cx="13" cy="20.5" r="3.2" fill="#223" /><path d="M7 30c1-7 11-7 12 0z" fill="#223" />
    <text x="29" y="28" textAnchor="middle" fontFamily="Inter, sans-serif" fontSize="13" fill="#333">@</text>
  </> },
  { name: "Folder", art: <>
    <path d="M1 3h12l3 3h22v8H1z" fill="#57b4e6" /><path d="M13 8h22v5H13z" fill="#333" /><path d="M0 11h40v27H0z" fill="#71c8f5" />
  </> },
  { name: "Documents", size: 42, lift: -1, art: <>
    <path d="M6 1h28v34H6z" fill="#f3f3f3" stroke="#ccc" strokeWidth="0.5" /><path d="M9 4h17l7 8v27H9z" fill="#fff" stroke="#ccc" strokeWidth="0.5" />
    <path d="M26 4v8h7" fill="#ddd" /><path d="M13 14h9M13 18h14M13 21h14M13 26h14M15 33h12" stroke="#aaa" /><path d="M15 35h12" stroke="#555" strokeWidth="2" />
  </> },
  { name: "Trash", size: 42, lift: -1, art: <>
    <path d="M4 5h32l-5 32q-11 4-22 0z" fill="#e9eaec" stroke="#c4c6c9" /><ellipse cx="20" cy="6" rx="15.500" ry="4.500" fill="#c7c9cc" />
    <path d="M8 6l5-4 5 4 4-5 4 4 4-1 2 3-10 3-10-2z" fill="#f7f7f7" /><path d="M11 3l3 3M14 6l2-2M20 2l2 4M27 3l-3 3M30 7l1-2" stroke="#334" />
    <path d="M11 16c8 3 12-2 18 1M12 25c6-2 10 3 16 0M13 32c5 2 9-1 14 1M16 12l2 10M25 14l-2 12" fill="none" stroke="#cdd0d3" />
  </> },
];

/* ---------- data ---------- */

const photos: [number, number, string][] = [
  [337, 225, "tca"], [339, 227, "t"], [309, 339, "t"], [339, 227, "tca"], [339, 183, "tsca"],
  [339, 227, "ta"], [228, 339, "ta"], [215, 339, "tca"], [339, 227, "ta"], [339, 227, "ta"],
  [339, 208, "tca"], [339, 327, "tca"], [339, 188, "tca"], [339, 186, "tca"], [339, 207, "tca"],
];

type StripPhoto = { w?: number; h?: number; b: string; dot?: "grey" | "light"; lit?: boolean; stars?: number };
const strip: StripPhoto[] = [
  { b: "tca" }, { b: "t" }, { w: 50, h: 55, b: "t" }, { b: "tca" }, { w: 66, h: 36, b: "tsca", dot: "grey" }, { b: "ta" },
  { w: 39, h: 58, b: "ta" }, { w: 37, h: 58, b: "tca" }, { b: "ta" }, { b: "ta" }, { w: 66, h: 41, b: "tca" },
  { w: 50, h: 48, b: "tca", dot: "light", lit: true }, { w: 66, h: 38, b: "tca", dot: "light", lit: true }, { w: 66, h: 37, b: "tca" },
  { w: 66, h: 41, b: "tca" }, { b: "ta" }, { b: "ta", dot: "light", lit: true }, { b: "ta" }, { b: "t" }, { b: "ta" }, { b: "tca" },
  { b: "ta" }, { b: "tsa", dot: "grey" }, { b: "ta", stars: 3 }, { w: 66, h: 39, b: "tca" }, { b: "ta" }, { b: "ta" }, { w: 64, b: "ca" },
  { w: 64, b: "ca" }, { b: "ca" }, { w: 39, h: 58, b: "tca" }, { w: 39, h: 58, b: "tca" }, { w: 49, b: "tca" }, { w: 40, h: 58, b: "tca" },
];

const catalog: [string, string][] = [
  ["All Photographs", "1866"], ["All Synced Photographs", "0"], ["Quick Collection  +", "64"],
  ["Previous Import", "25"], ["Previous Export as Catalog", "14"], ["Missing Photographs", "1865"],
];

const suggestions = ["CC Wetland", "Bee", "Pioneer Dairy", "Agapanthis", "Bee on Thistle Flower", "Rainbow Lorikeet", "Spider", "Common Garden Skink", "Meadow Katydid"];
const keywordSet = ["Landscape", "Macro", "Flowers & Plants", "Spring", "Summer", "Wildlife", "Fall", "Winter", "People"];

const metaTop: MetaItem[] = [
  { label: "File Name", value: "STE_0192.NEF", kind: "input", act: "list" },
  { label: "Copy Name", kind: "input", act: "go" },
  { label: "Folder", value: "Purple Flower", act: "go" },
  { label: "Metadata Status", value: "Has been changed", act: "list" },
];
const metaText: MetaItem[] = [
  { label: "Title", kind: "input" },
  { label: "Caption", kind: "area" },
  { label: "Copyright", kind: "input" },
  { label: "Copyright Status", value: "Unknown", kind: "select" },
  { label: "Creator", value: "STEVE GRANT", kind: "input" },
  { label: "Sublocation", kind: "input" },
];
const metaTime: MetaItem[] = [
  { label: "Capture Time", value: "3:17:49 pm", act: "list" },
  { label: "Capture Date", value: "17 Jun 2018", act: "go" },
];
const metaShot: MetaItem[] = [
  { label: "Dimensions", value: "5568 x 3712" },
  { label: "Cropped", value: "5565 x 3712", act: "go" },
  { label: "Exposure", value: "⅕ sec at ƒ / 11" },
  { label: "Focal Length", value: "135 mm" },
  { label: "ISO Speed Rating", value: "ISO 400", act: "go" },
  { label: "Flash", value: "Did not fire" },
  { label: "Make", value: "NIKON CORPORATION" },
  { label: "Model", value: "NIKON D7500" },
  { label: "Lens", value: "18.0-135.0 mm f/3.5-5.6", act: "go" },
];

/* ---------- sections ---------- */

const SystemMenu = () => (
  <MenuBar>
    <MenuList>
      <svg width="16" height="17" viewBox="0 0 16 17" fill="#444">
        <path d="M11 4c1.5 0 2.6.8 3.2 1.6-2.6 1.6-2.2 5 .5 6-.7 2-2.1 4.4-3.7 4.4-1 0-1.5-.6-2.7-.6s-1.7.6-2.7.6C3.7 16 1.5 12.5 1.5 9.3 1.5 6 3.5 4.2 5.5 4.2c1.2 0 2 .7 2.9.7.8 0 1.5-.9 2.6-.9zM10.7.5c.1 1.8-1.3 3.2-2.8 3.2C7.7 2.2 9.1.7 10.7.5z" />
      </svg>
      {["Lightroom", "File", "Edit", "Library", "Photo", "Metadata", "View", "Window", "Help"].map((m, i) => (
        <MenuItem key={m} $weight={i === 0 ? 700 : 400}>{m}</MenuItem>
      ))}
    </MenuList>
    <StatusList>
      <svg width="18" height="17" viewBox="0 0 18 17" fill="#444"><path d="M4.5 0 9 3 4.5 6 0 3zM13.5 0 18 3l-4.5 3L9 3zM4.5 6 9 9l-4.5 3L0 9zM13.5 6 18 9l-4.5 3L9 9zM9 10.5l4 3L9 16.5l-4-3z" /></svg>
      <svg width="20" height="15" viewBox="0 0 20 15"><path d="M5 14A4.700 4.700 0 0 1 4.500 4.700a5.900 5.900 0 0 1 10.800-.2A4.800 4.800 0 0 1 15 14z" fill="#a0a0a0" /><path d="M6 11a2.800 2.800 0 1 1 2-5l4.500 4.500a2.800 2.800 0 1 0 0-5L10 7.500" fill="none" stroke="#fafafa" strokeWidth="1.200" /></svg>
      <svg width="17" height="17" viewBox="0 0 17 17" fill="none" stroke="#b8b8b8" strokeWidth="2"><path d="M8.5 1A7.5 7.5 0 1 0 16 9M8.5 5a3.5 3.5 0 1 0 3.5 4" /><path d="M11 2a7 7 0 0 1 4 4" opacity="0.5" /></svg>
      <svg width="20" height="17" viewBox="0 0 20 17"><path d="M1 14C-1 8 1 3 4 1c3 1 4 4 5 8 1-4 3-7 6-8 3 2 4 6 3 10h-3c0-2 0-3-1-5-2 3-3 6-4 9-3-1-5-4-6-8-1 2-1 5-3 7z" fill="#444" /><circle cx="15" cy="12.5" r="4.5" fill="#444" stroke="#fafafa" /><path d="M15 10v3M15 14v1" stroke="#fff" strokeWidth="1.3" /></svg>
      <Tri dir="up" size={15} color="#444" />
      <svg width="18" height="15" viewBox="0 0 18 15"><path d="M4 11H1V1h16v10h-3" fill="none" stroke="#444" strokeWidth="1.3" /><path d="M9 8l5 6H4z" fill="#444" /></svg>
      <svg width="24" height="17" viewBox="0 0 24 17" fill="none" stroke="#888" strokeWidth="1.5"><path d="M7 9a7 7 0 1 1 2 5" /><path d="M4 7l3 3 2-3M14 4v5l3 2" /></svg>
      <svg width="20" height="16" viewBox="0 0 20 16" fill="none" stroke="#888"><path d="M6 4l8 7-4 4V1l4 4-8 7" /><path d="M3 8h2M8 8h1M15 8h2" strokeWidth="2" /></svg>
      <svg width="21" height="15" viewBox="0 0 21 15" fill="none" stroke="#444" strokeWidth="2"><path d="M1 5.5c5-5.5 14-5.5 19 0M4 8.5c3.5-4 9.500-4 13 0M7 11.200c2-2 5-2 7 0" /><circle cx="10.5" cy="13.2" r="0.8" /></svg>
      <span>Sat 10:22 am</span>
      <MenuItem $weight={500}>Steve</MenuItem>
      <svg width="24" height="16" viewBox="0 0 24 16" fill="none" stroke="#444" strokeWidth="1.5"><circle cx="10" cy="6.5" r="5" /><path d="M13.5 10.5l4.5 4.5" /></svg>
      <svg width="16" height="16" viewBox="0 0 16 16"><defs><linearGradient id="siri" x1="0.600" x2="0.400" y2="1"><stop stopColor="#c040b8" /><stop offset="0.4" stopColor="#7a4fd0" /><stop offset="1" stopColor="#22b9dc" /></linearGradient></defs><circle cx="8" cy="8" r="8" fill="#1d2350" /><circle cx="8" cy="8" r="6.5" fill="url(#siri)" /><path d="M8 4l1 3 4 2-4-.5L8 14l-1-5.500L3 9l4-2z" fill="#fff" opacity="0.9" /></svg>
      <svg width="18" height="12" viewBox="0 0 18 12" stroke="#444" strokeWidth="2"><path d="M0 1h2M5 1h10M0 6h2M5 6h13M0 11h2M5 11h11" /></svg>
    </StatusList>
  </MenuBar>
);

const LeftPanel = () => (
  <Panel $w={247}>
    <PanelHead>
      <HeadTitle><Tri dir="down" />Navigator</HeadTitle>
      <Zooms><button>FIT</button><button>FILL</button><button>1:1</button><button>2:1</button><UpDown /></Zooms>
    </PanelHead>
    <Box $dark $h={239} />
    <PanelHead><HeadTitle><Tri dir="down" />Catalog</HeadTitle></PanelHead>
    <CatalogList>
      {catalog.map(([name, count], i) => (
        <CatalogRow key={name} $on={i === 5}><span style={{ whiteSpace: "pre" }}>{name}</span><span>{count}</span></CatalogRow>
      ))}
    </CatalogList>
    <PanelHead><HeadTitle><Tri dir="down" />Folders</HeadTitle><button aria-label="Add folder"><Plus menu /></button></PanelHead>
    <FolderList>
      <FolderRow><Led $on />Seagate Backup Plus…<small>0.2 / 2 TB</small><Tri dir="left" color="#222" /></FolderRow>
      <FolderRow $off><Led />Steves Photos<Push /><Tri dir="left" color="#222" /></FolderRow>
    </FolderList>
    <PanelHead><HeadTitle><Tri dir="right" />Collections</HeadTitle><button aria-label="Add collection"><Plus menu /></button></PanelHead>
    <Box $h={4} />
    <PanelHead><HeadTitle><Tri dir="right" />Publish Services</HeadTitle><button aria-label="Add service"><Plus menu /></button></PanelHead>
    <Box $h={4} />
    <PanelSpace />
    <PanelFoot>
      <FootButton>Import...</FootButton>
      <FootButton>Export...</FootButton>
    </PanelFoot>
  </Panel>
);

const toneDark = "linear-gradient(#3c3c3c, #363636)";

const RightPanel = () => (
  <Panel $w={371}>
    <PanelHead><Push /><HeadTitle>Histogram<Tri dir="down" /></HeadTitle></PanelHead>
    <HistBox $h={148}>
      <Graph />
      <HistNote><MissingMark w={13} h={10} color="#ddd" />Photo is missing</HistNote>
    </HistBox>
    <PanelHead>
      <Pick id="quick" name="Saved preset" value="Custom" w={181} tone={toneDark} color="#222" />
      <HeadTitle>Quick Develop<Tri dir="left" /></HeadTitle>
    </PanelHead>
    <Box $h={4} />
    <PanelHead><Push /><HeadTitle>Keywording<Tri dir="down" /></HeadTitle></PanelHead>
    <Box $h={337}>
      <KeySection>
        <KeyHead>
          <label htmlFor="tags">Keyword Tags</label>
          <Pick id="tags" name="Keyword Tags" value="Enter Keywords" />
          <Tri dir="down" color="#222" />
        </KeyHead>
        <KeyText aria-label="Keywords" defaultValue="Backyard, Buff Point, Macro, Purple Flower" />
        <KeyInput aria-label="Add keywords" placeholder="Click here to add keywords" />
      </KeySection>
      <KeySection>
        <KeyHead><h2>Keyword Suggestions</h2><Tri dir="down" color="#222" /></KeyHead>
        <KeyGrid $row={20}>{suggestions.map((k) => <KeyWord key={k}>{k}</KeyWord>)}</KeyGrid>
      </KeySection>
      <KeySection>
        <KeyHead>
          <label htmlFor="set">Keyword Set</label>
          <Pick id="set" name="Keyword Set" value="Outdoor Photography" />
          <Tri dir="down" color="#222" />
        </KeyHead>
        <KeyGrid $row={19}>{keywordSet.map((k) => <KeyWord key={k} $on={k === "Macro"}>{k}</KeyWord>)}</KeyGrid>
      </KeySection>
    </Box>
    <PanelHead><button aria-label="Add keyword"><Plus /></button><HeadTitle>Keyword List<Tri dir="left" /></HeadTitle></PanelHead>
    <Box $h={4} />
    <PanelHead>
      <Pick id="view" name="Metadata view" value="Default" w={196} tone={toneDark} />
      <HeadTitle>Metadata<Tri dir="down" /></HeadTitle>
    </PanelHead>
    <Box $grow>
      <MetaGroup $strong>
        <MetaRow><label htmlFor="preset">Preset</label><Pick id="preset" name="Preset" value="None" color="#aaa" /></MetaRow>
      </MetaGroup>
      <MetaGroup>{metaTop.map((m) => <MetaLine key={m.label} item={m} />)}</MetaGroup>
      <MetaGroup>{metaText.map((m) => <MetaLine key={m.label} item={m} />)}</MetaGroup>
      <MetaGroup><Rating><span>Rating</span><i /><i /><i /><i /><i /></Rating></MetaGroup>
      <MetaGroup><MetaLine item={{ label: "Label", kind: "input", act: "go" }} /></MetaGroup>
      <MetaGroup>{metaTime.map((m) => <MetaLine key={m.label} item={m} />)}</MetaGroup>
      <MetaGroup>{metaShot.map((m) => <MetaLine key={m.label} item={m} />)}</MetaGroup>
    </Box>
    <PanelFoot>
      <FootTip><Tri dir="down" size={5} /></FootTip>
      <FootButton $off>Sync Metadata</FootButton>
      <FootButton $off>Sync Settings</FootButton>
    </PanelFoot>
  </Panel>
);

const CentreArea = () => (
  <Centre>
    <FilterBar>
      <FilterTitle>Library Filter :</FilterTitle>
      <FilterTabs>
        {["Text", "Attribute", "Metadata", "None"].map((t) => <FilterTab key={t} $on={t === "None"}>{t}</FilterTab>)}
      </FilterTabs>
      <FilterEnd>
        <button>Filters Off</button><UpDown />
        <svg width="13" height="17" viewBox="0 0 13 17"><path d="M3 7V4a3.5 3.5 0 0 1 7 0v3" fill="none" stroke="#222" strokeWidth="3" /><path d="M3 5V4a3.5 3.5 0 0 1 7 0v4" fill="none" stroke="#ccc" strokeWidth="1.5" /><path d="M0.5 8.5h12v8H.5z" fill="#c5bf98" stroke="#222" /><path d="M1 11h11M1 13.500h11" stroke="#6b674e" /></svg>
      </FilterEnd>
    </FilterBar>
    <FilterLip />
    <GridArea>
      <PhotoGrid>
        {photos.map(([w, h, b], i) => (
          <Cell key={i} $on={i === 0}>
            <CellNumber $on={i === 0}>{i + 1}</CellNumber>
            <CellMark><MissingMark /></CellMark>
            <Photo $w={w} $h={h} $on={i === 0}>
              {i === 4 && <LabelDot />}
              <Badges>{b.split("").map((k) => <Badge key={k} kind={k} />)}</Badges>
            </Photo>
          </Cell>
        ))}
      </PhotoGrid>
      <GridScroll><i /></GridScroll>
    </GridArea>
    <Toolbar>
      <ViewModes>
        <button aria-label="Grid view"><svg width="31" height="20" viewBox="0 0 31 20" fill="#d6d6d6">{[0, 1, 2, 3].flatMap((r) => [0, 1, 2, 3, 4].map((c) => r === 1 && c === 3 ? null : <rect key={`${r}${c}`} x={c * 6 + 1} y={r * 5 + 0.5} width="5" height="4" />))}</svg></button>
        <button aria-label="Loupe view"><svg width="31" height="20" viewBox="0 0 31 20"><path d="M.5.5h30v19H.5z" fill="#8a8a8a" stroke="#a5a5a5" /><path d="M7.5 5h16v10h-16z" fill="#6c6c6c" stroke="#333" /></svg></button>
        <button aria-label="Compare view"><svg width="33" height="20" viewBox="0 0 33 20"><path d="M.5.5h32v19H.5z" fill="#8a8a8a" stroke="#a5a5a5" /><path d="M16.5 0v20M4 5l9 10M13 5 4 15M20 5l4.500 5L29 5M24.500 10v5" fill="none" stroke="#333" /></svg></button>
        <button aria-label="Survey view"><svg width="32" height="20" viewBox="0 0 32 20"><path d="M.5.5h31v19H.5z" fill="#8a8a8a" stroke="#a5a5a5" /><path d="M3.5 3.5h11v5h-11zM17.5 3.5h11v5h-11zM3.5 11.5h11v5h-11z" fill="#777" stroke="#333" /><path d="M18 16h2M22 16h2M26 16h2" stroke="#333" strokeWidth="2" /></svg></button>
        <button aria-label="People view"><svg width="31" height="20" viewBox="0 0 31 20"><path d="M.5.5h30v19H.5z" fill="#858585" stroke="#a5a5a5" /><path d="M8.500 9C8 4 11 2 15.500 2S23 4 22.500 9c0 5-3 9-7 9s-7-4-7-9z" fill="#777" stroke="#333" /><path d="M9 8c3 0 4-3 6-3s4 3 7 3M12 10h2M17 10h2M13 14c2 1 3 1 5 0" fill="none" stroke="#333" /></svg></button>
      </ViewModes>
      <Rule />
      <button aria-label="Painter"><svg width="30" height="30" viewBox="0 0 30 30"><circle cx="15" cy="15" r="14" fill="#474747" /><path d="M8.500 13h13v13h-13z" fill="#888" stroke="#1e1e1e" /><path d="M12 7h6q3 2 3 5H9q0-3 3-5z" fill="#b5b5b5" stroke="#1e1e1e" /><path d="M12.500 2.500h5v4h-5z" fill="#999" stroke="#1e1e1e" /><path d="M15 14l3 5v5h-6v-5z" fill="#ccc" stroke="#333" strokeWidth="0.5" /></svg></button>
      <Rule />
      <button aria-label="Sort direction"><svg width="32" height="24" viewBox="0 0 32 24" fill="none" stroke="#8e8e8e" strokeWidth="1.5"><path d="M6 4c-4 4-4 11-1 15M2 5l4-1 1 4M26 20c4-4 4-11 1-15M29 19l-4 1-1-4" /><path d="M12 11l4-10 4 10M13.5 8h5M12 13.5h7L12 22.5h8" strokeWidth="2" /></svg></button>
      <SortBy htmlFor="sort">Sort:<select id="sort"><option>Capture Time</option></select><UpDown /></SortBy>
      <Rule />
      <Push />
      <ThumbSize>Thumbnails<input type="range" min="0" max="100" defaultValue="69" /></ThumbSize>
      <Rule />
      <button aria-label="Toolbar options"><svg width="13" height="8" viewBox="0 0 13 8" fill="#c2c2c2"><path d="M0 0h13L6.5 8z" /></svg></button>
    </Toolbar>
  </Centre>
);

const chips = ["#7a2f2f", "#6e6a1e", "#27602b", "#2b4d80", "#4a3278", "#888888", "#3c3c3c"];
const flags = ["#2c2c2c", "none", "#000"];

const FilmStrip = () => (
  <>
    <InfoBar>
      <InfoSide>
        <Monitor $on>1</Monitor>
        <Monitor>2</Monitor>
        <Dots />
        <button aria-label="Grid"><svg width="15" height="15" viewBox="0 0 15 15" fill="#6e6e6e"><path d="M0 0h6v6H0zM9 0h6v6H9zM0 9h6v6H0zM9 9h6v6H9z" /></svg></button>
        <button aria-label="Back"><svg width="14" height="15" viewBox="0 0 14 15" fill="#6e6e6e"><path d="M8 0v5h6v5H8v5L0 7.5z" /></svg></button>
        <button aria-label="Forward"><svg width="14" height="15" viewBox="0 0 14 15" fill="#6e6e6e"><path d="M6 0v5H0v5h6v5l8-7.500z" /></svg></button>
        <Dots />
        <Source>Missing Photographs</Source>
        <Crumb>1865 photos / <b>1 selected</b> /STE_0192.NEF <Tri dir="down" size={7} color="#aaa" /></Crumb>
      </InfoSide>
      <InfoSide>
        <span>Filter :</span>
        {flags.map((f, i) => (
          <button key={i} aria-label={`Flag ${i + 1}`}><svg width="10" height="18" viewBox="0 0 10 18" overflow="visible"><path d="M6 2l6 6-6 6-6-6zM0 8l-3-1M6 14l4 4" fill={f} stroke="#555" strokeWidth="0.8" strokeDasharray={i === 1 ? "1 2" : "2 1"} /></svg></button>
        ))}
        <Dots />
        <AtLeast>≥</AtLeast>
        <Stars>
          {[1, 2, 3, 4, 5].map((n) => (
            <button key={n} aria-label={`${n} stars`}><svg width="15" height="15" viewBox="0 0 15 15" fill="#7a7a7a"><path d="M7.5 0l2 5.4 5.500.2-4.400 3.500 1.600 5.600-4.700-3.200-4.700 3.200 1.600-5.600L0 5.600l5.500-.2z" /></svg></button>
          ))}
        </Stars>
        <Dots />
        <Chips>{chips.map((c) => <Chip key={c} $c={c} aria-label="Colour label" />)}</Chips>
        <Dots />
        <Pick id="filters" name="Filter preset" value="Filters Off" w={147} tone="#1b1b1b" />
        <Switch aria-label="Toggle filters"><i /></Switch>
      </InfoSide>
    </InfoBar>
    <Band>
      <SideTip />
      <StripFrame>
        <Strip>
          {strip.map((f, i) => (
            <StripCell key={i} $on={i === 0} $lit={f.lit}>
              <StripMark><MissingMark w={11} h={9} color="#111" /></StripMark>
              <Photo $w={f.w ?? 62} $h={f.h ?? 42}>
                {f.dot && <LabelDot $light={f.dot === "light"} />}
                <Badges>{f.b.split("").map((k) => <Badge key={k} kind={k} />)}</Badges>
              </Photo>
              {f.stars && <StripRating>{"*".repeat(f.stars)}</StripRating>}
            </StripCell>
          ))}
        </Strip>
        <StripScroll><i /></StripScroll>
      </StripFrame>
      <SideTip><Tri dir="right" size={8} color="#aaa" /></SideTip>
    </Band>
  </>
);

export default function App() {
  return (
    <Page>
      <Global />
      <SystemMenu />
      <Lightroom>
        <Identity>
          <Brand>
            <Logo>Lr</Logo>
            <BrandText>
              <small>Adobe Lightroom 6</small>
              <button>Get started with Lightroom mobile <Tri dir="right" size={8} color="#9a9a9a" /></button>
            </BrandText>
          </Brand>
          <Tri dir="up" size={8} color="#777" />
          <Modules>
            {["Library", "Develop", "Map", "Book", "Slideshow", "Print", "Web"].map((m) => (
              <ModuleLink key={m} href="#" $on={m === "Library"}>{m}</ModuleLink>
            ))}
          </Modules>
        </Identity>
        <Band $grow>
          <SideTip><Tri dir="left" size={9} color="#777" /></SideTip>
          <Frame>
            <Rail><Ribs $h={264} /><RailGap $grow={1} /><Ribs $h={42} /></Rail>
            <LeftPanel />
            <CentreArea />
            <RightPanel />
            <Rail><Ribs $h={173} /><RailThumb /><RailGap $grow={64} /><Ribs $h={42} /></Rail>
          </Frame>
          <SideTip><Tri dir="right" size={9} color="#777" /></SideTip>
        </Band>
        <FilmStrip />
      </Lightroom>
      <DockRow>
        <Dock>
          {dock.map((d) => d.art ? (
            <DockItem key={d.name} $slot={d.slot ?? 48} $lift={d.lift} aria-label={d.name}>
              <Art size={d.size ?? 40}>{d.art}</Art>
              {d.run && <RunDot />}
              {d.tip && <Tip>{d.name}</Tip>}
            </DockItem>
          ) : <DockRule key={d.name} />)}
        </Dock>
      </DockRow>
    </Page>
  );
}
